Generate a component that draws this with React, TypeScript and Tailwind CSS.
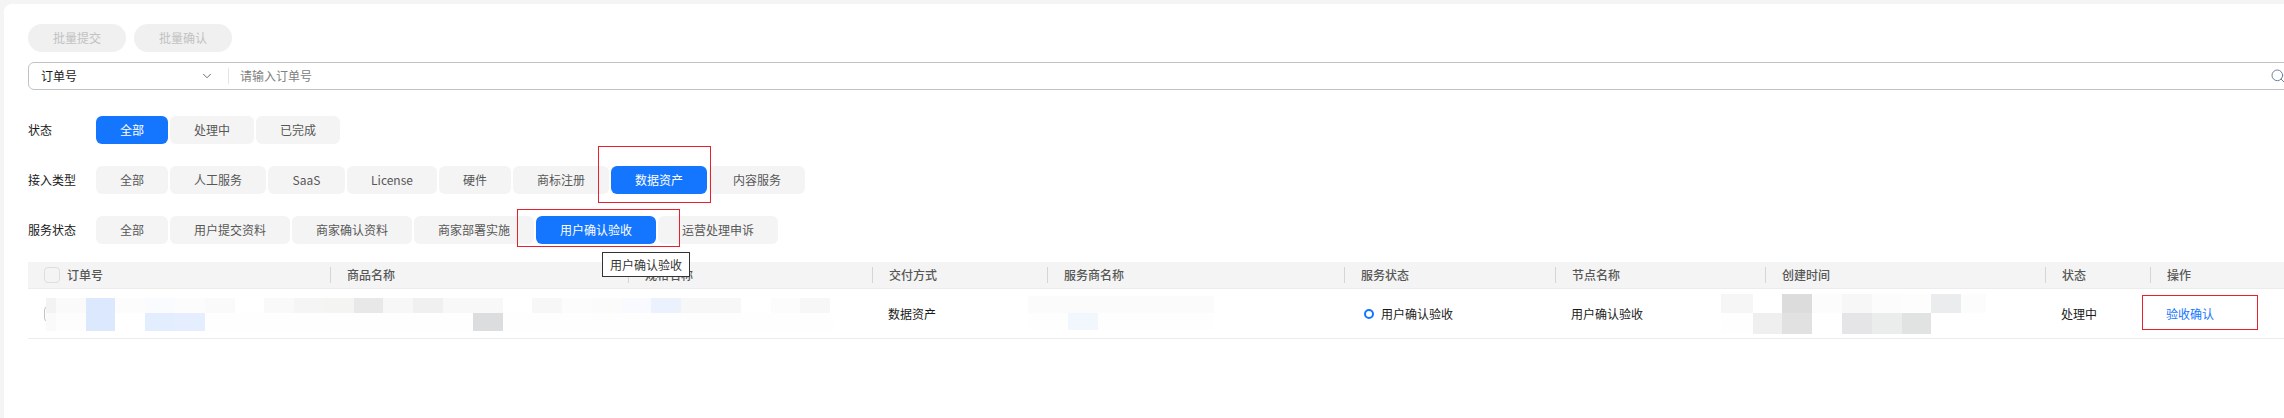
import { ChevronDown, Search } from "lucide-react";
import type { ReactNode } from "react";

type Cell = [number, number, number, string];

// x, width, row (0 = top band, 1 = bottom band), colour. x is measured from the table's left edge.
const mosaic: { y: number[]; h: number[]; cells: Cell[] }[] = [
  {
    y: [9, 24],
    h: [15, 18],
    cells: [
      [18, 10, 0, "#f3f3f3"], [28, 30, 0, "#fafafa"], [58, 29, 0, "#dce8fd"], [87, 30, 0, "#fcfcfc"],
      [117, 30, 0, "#fafbff"], [147, 30, 0, "#fcfcfc"], [177, 30, 0, "#fafafa"], [236, 30, 0, "#f9f9f9"],
      [266, 30, 0, "#f5f5f5"], [296, 30, 0, "#f4f4f3"], [326, 29, 0, "#e8e8e8"], [355, 30, 0, "#f7f7f7"],
      [385, 30, 0, "#f0f0f0"], [415, 60, 0, "#f8f8f8"], [504, 30, 0, "#f7f7f7"], [534, 30, 0, "#fcfcfc"],
      [564, 30, 0, "#fbfbfb"], [594, 29, 0, "#f9faff"], [623, 30, 0, "#ebf2fe"], [653, 60, 0, "#f7f7f7"],
      [743, 29, 0, "#fcfcfc"], [772, 30, 0, "#f7f7f7"],
      [18, 10, 1, "#fafafa"], [28, 30, 1, "#fdfdfd"], [58, 29, 1, "#dce8fd"], [117, 30, 1, "#e2edfe"],
      [147, 30, 1, "#e4eefe"], [177, 268, 1, "#fefefe"], [445, 30, 1, "#dcdddf"], [475, 330, 1, "#fefefe"],
    ],
  },
  {
    y: [7, 24],
    h: [17, 17],
    cells: [
      [1000, 186, 0, "#fbfbfb"], [1000, 40, 1, "#fefefe"], [1040, 30, 1, "#f2f7fe"], [1070, 116, 1, "#fefefe"],
    ],
  },
  {
    y: [5, 24],
    h: [19, 21],
    cells: [
      [1693, 32, 0, "#f6f6f6"], [1754, 30, 0, "#dcdcdc"], [1784, 30, 0, "#fcfcfc"], [1814, 30, 0, "#f7f7f7"],
      [1844, 30, 0, "#fcfcfc"], [1874, 29, 0, "#fdfdfd"], [1903, 30, 0, "#ebecee"], [1933, 25, 0, "#fcfcfc"],
      [1693, 32, 1, "#fefefe"], [1725, 29, 1, "#efefef"], [1754, 30, 1, "#e1e1e1"], [1814, 30, 1, "#e5e5e7"],
      [1844, 30, 1, "#ebecec"], [1874, 29, 1, "#e1e2e2"],
    ],
  },
];

const gridCols = "grid grid-cols-[302px_298px_244px_175px_297px_211px_210px_280px_105px_160px]";

const headers = ["商品名称", "规格名称", "交付方式", "服务商名称", "服务状态", "节点名称", "创建时间", "状态", "操作"];

function Tab({ label, active, width, children }: { label: string; active?: boolean; width?: string; children?: ReactNode }) {
  return (
    <div
      className={`${
        active
          ? "relative flex h-7 items-center justify-center rounded-md bg-[#1476ff] px-6 text-white"
          : "relative flex h-7 items-center justify-center rounded-md bg-[#f4f4f4] px-6 text-[#575757]"
      } ${width ?? ""}`}
    >
      {label}
      {children}
    </div>
  );
}

function FilterRow({ label, className, children }: { label: string; className: string; children: ReactNode }) {
  return (
    <div className={`flex items-center ${className}`}>
      <div className="w-[68px] text-[#191919]">{label}</div>
      <div className="flex gap-[2px]">{children}</div>
    </div>
  );
}

export default function App() {
  return (
    <div className="h-[418px] w-[2284px] overflow-hidden bg-[#f4f4f4] pl-1 pt-1 font-['Noto_Sans_CJK_SC','Noto_Sans',sans-serif] text-xs">
      <div className="h-[440px] w-[2320px] rounded-tl-lg bg-white pl-6 pt-5">
        <div className="flex gap-2">
          <div className="flex h-7 w-[98px] items-center justify-center rounded-full bg-[#f0f0f0] text-[#c2c2c2]">批量提交</div>
          <div className="flex h-7 w-[98px] items-center justify-center rounded-full bg-[#f0f0f0] text-[#c2c2c2]">批量确认</div>
        </div>

        <div className="mt-[10px] flex h-7 w-[2263px] items-center rounded-md border border-[#c2c2c2] pl-3 pr-1">
          <span className="text-[#191919]">订单号</span>
          <ChevronDown className="ml-[123px] text-[#575757]" size={14} strokeWidth={1.5} />
          <div className="ml-[14px] h-4 w-px bg-[#e4e4e4]" />
          <span className="ml-[11px] text-[#808080]">请输入订单号</span>
          <Search className="ml-auto text-[#6f7f99]" size={16} strokeWidth={1.5} />
        </div>

        <FilterRow label="状态" className="mt-[26px]">
          <Tab label="全部" active />
          <Tab label="处理中" />
          <Tab label="已完成" />
        </FilterRow>

        <FilterRow label="接入类型" className="mt-[22px]">
          <Tab label="全部" />
          <Tab label="人工服务" />
          <Tab label="SaaS" width="w-[77px]" />
          <Tab label="License" width="w-[90px]" />
          <Tab label="硬件" />
          <Tab label="商标注册" />
          <Tab label="数据资产" active>
            <div className="absolute -bottom-[9px] -left-[13px] -right-[4px] -top-5 z-10 border border-[#e8202e]" />
          </Tab>
          <Tab label="内容服务" />
        </FilterRow>

        <FilterRow label="服务状态" className="mt-[22px]">
          <Tab label="全部" />
          <Tab label="用户提交资料" />
          <Tab label="商家确认资料" />
          <Tab label="商家部署实施" />
          <Tab label="用户确认验收" active>
            <div className="absolute -bottom-[3px] -left-[19px] -right-6 -top-[7px] z-10 border border-[#e8202e]" />
            <div className="absolute left-[66px] top-9 z-10 flex h-[25px] w-[88px] items-center whitespace-nowrap border border-[#333333] bg-white px-[7px] text-[#333333]">
              用户确认验收
            </div>
          </Tab>
          <Tab label="运营处理申诉" />
        </FilterRow>

        <div className="mt-[18px]">
          <div className={`${gridCols} h-[27px] items-center border-b border-[#ececec] bg-[#f4f4f4] font-medium text-[#575757]`}>
            <div className="flex items-center gap-[7px] pl-4">
              <span className="h-4 w-4 rounded border border-[#dedede] bg-[#f4f4f4]" />
              订单号
            </div>
            {headers.map((h) => (
              <div key={h} className="flex h-4 items-center border-l border-[#d5d5d5] pl-4">
                {h}
              </div>
            ))}
          </div>

          <div className={`${gridCols} relative h-[50px] items-center border-b border-[#ececec] text-[#191919]`}>
            <div className="pl-4">
              <span className="block h-4 w-4 rounded border border-[#c2c2c2]" />
            </div>
            <div />
            <div />
            <div className="pl-4">数据资产</div>
            <div />
            <div className="flex items-center pl-[20px]">
              <span className="h-[10px] w-[10px] rounded-full border-2 border-[#1476ff]" />
              <span className="ml-[7px]">用户确认验收</span>
            </div>
            <div className="pl-4">用户确认验收</div>
            <div />
            <div className="pl-4">处理中</div>
            <div className="pl-4 text-[#1476ff]">
              <span className="relative inline-block">
                验收确认
                <span className="absolute -bottom-2 -left-6 -right-11 -top-[11px] border border-[#e8202e]" />
              </span>
            </div>

            <svg className="pointer-events-none absolute left-0 top-0 h-[49px] w-[2000px]" viewBox="0 0 2000 49" shapeRendering="crispEdges">
              {mosaic.map((m) =>
                m.cells.map(([x, w, row, fill]) => (
                  <rect key={`${x}-${row}`} x={x} y={m.y[row]} width={w} height={m.h[row]} fill={fill} />
                )),
              )}
            </svg>
          </div>
        </div>
      </div>
    </div>
  );
}
